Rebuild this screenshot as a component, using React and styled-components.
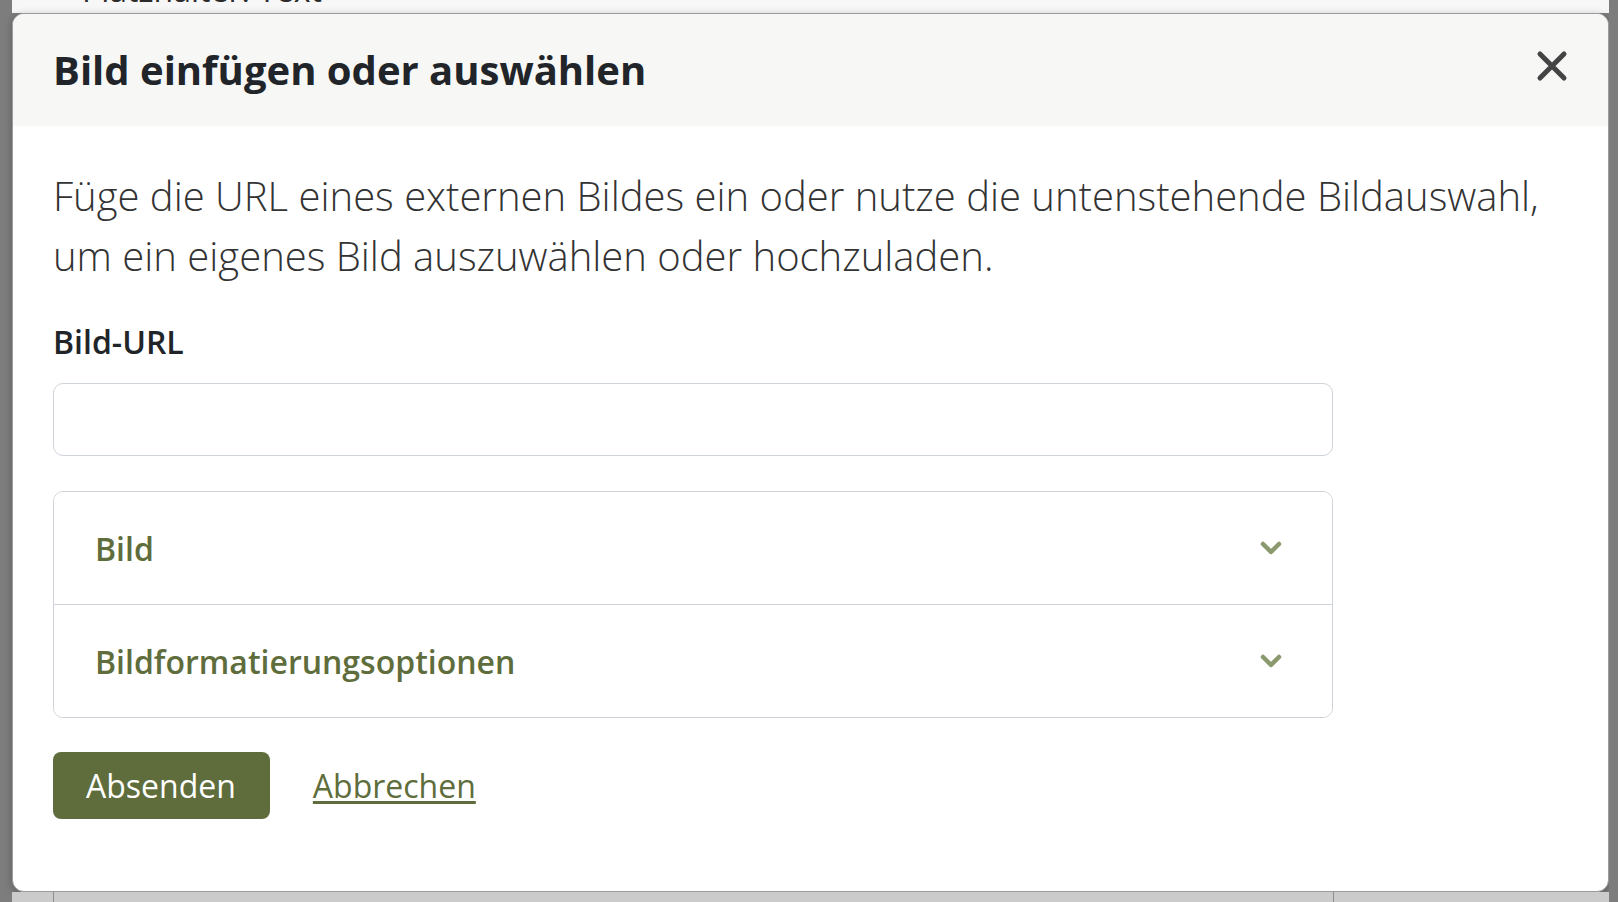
import React from 'react';
import styled, { createGlobalStyle } from 'styled-components';

const GlobalStyle = createGlobalStyle`
  html, body {
    margin: 0;
    padding: 0;
  }

  body {
    font-family: "Open Sans", "Noto Sans", sans-serif;
    background: #7d7d7d;
    color: #212529;
  }

  * {
    box-sizing: border-box;
  }
`;

const olive = '#5e6d3b';

const Screen = styled.div`
  display: flex;
  width: 1618px;
  height: 902px;
  overflow: hidden;
`;

const Strip = styled.div`
  flex: 0 0 ${(p) => p.$width}px;
  background: #7d7d7d;
`;

const Center = styled.div`
  flex: 1;
  display: flex;
  flex-direction: column;
  min-width: 0;
`;

const Peek = styled.div`
  flex: 0 0 ${(p) => p.$height}px;
  background: ${(p) => p.$bg};
  overflow: hidden;
  padding-left: 41px;
`;

const PeekColumn = styled.div`
  width: 1281px;
  height: 100%;
  border-left: 1px solid ${(p) => p.$line};
  border-right: 1px solid ${(p) => p.$line};
`;

const PeekText = styled.div`
  margin-top: -30px;
  padding-left: 28px;
  font-size: 32px;
  line-height: 40px;
  color: #2b2b2b;
`;

const Modal = styled.div`
  flex: 1;
  display: flex;
  flex-direction: column;
  background: #fff;
  border: 1px solid #9c9c9c;
  border-radius: 12px;
  overflow: hidden;
  box-shadow: 0 2px 8px rgba(0, 0, 0, 0.25);
`;

const Header = styled.header`
  flex: 0 0 112px;
  display: flex;
  align-items: center;
  justify-content: space-between;
  padding: 0 40px 0 40px;
  background: #f7f7f5;
`;

const Title = styled.h1`
  margin: 0;
  font-size: 40px;
  font-weight: 700;
  line-height: 52px;
  color: #212529;
`;

const CloseButton = styled.button`
  display: flex;
  margin-bottom: 9px;
  padding: 0;
  border: none;
  background: transparent;
  cursor: pointer;
`;

const Body = styled.div`
  flex: 1;
  padding: 40px 40px 0 40px;
`;

const Intro = styled.p`
  margin: 0 0 32px;
  font-size: 40px;
  font-weight: 300;
  line-height: 60px;
  color: #333;
`;

const Form = styled.form`
  width: 1280px;
`;

const Label = styled.label`
  display: block;
  margin-bottom: 17px;
  font-size: 32px;
  font-weight: 600;
  line-height: 48px;
  color: #212529;
`;

const Input = styled.input`
  display: block;
  width: 100%;
  height: 73px;
  padding: 0 20px;
  border: 1px solid #ced4da;
  border-radius: 10px;
  font: inherit;
  font-size: 32px;
  outline: none;
`;

const Accordion = styled.div`
  margin-top: 35px;
  border: 1px solid #ced4da;
  border-radius: 10px;
  overflow: hidden;
`;

const AccordionItem = styled.button`
  display: flex;
  width: 100%;
  height: ${(p) => (p.$first ? 112 : 113)}px;
  align-items: center;
  justify-content: space-between;
  padding: 0 50px 0 41px;
  border: none;
  border-top: ${(p) => (p.$first ? 'none' : '1px solid #ced4da')};
  background: #fff;
  font-family: inherit;
  font-size: 32px;
  font-weight: 600;
  color: ${olive};
  text-align: left;
  cursor: pointer;
`;

const Footer = styled.div`
  display: flex;
  align-items: center;
  gap: 43px;
  margin-top: 34px;
`;

const SubmitButton = styled.button`
  height: 67px;
  padding: 0 34px 0 33px;
  border: none;
  border-radius: 8px;
  background: ${olive};
  font-family: inherit;
  font-size: 32px;
  font-weight: 400;
  color: #fff;
  cursor: pointer;
`;

const CancelLink = styled.a`
  font-size: 32px;
  color: ${olive};
  text-decoration: underline;
  text-underline-offset: 3px;
  cursor: pointer;
`;

const CloseIcon = () => (
  <svg width="32" height="32" viewBox="0 0 32 32" fill="none">
    <path d="M4 4 L28 28 M28 4 L4 28" stroke="#444" strokeWidth="5" strokeLinecap="round" />
  </svg>
);

const Chevron = () => (
  <svg width="22" height="14" viewBox="0 0 22 14" fill="none">
    <polyline
      points="3,3 11,11 19,3"
      stroke="#8b9a6e"
      strokeWidth="4.5"
      strokeLinecap="round"
      strokeLinejoin="round"
    />
  </svg>
);

const sections = ['Bild', 'Bildformatierungsoptionen'];

export default function App() {
  return (
    <>
      <GlobalStyle />
      <Screen>
        <Strip $width={12} />
        <Center>
          <Peek $height={13} $bg="#f7f7f7">
            <PeekColumn $line="#cfcfcf">
              <PeekText>Platzhalter: Text</PeekText>
            </PeekColumn>
          </Peek>
          <Modal role="dialog" aria-modal="true">
            <Header>
              <Title>Bild einfügen oder auswählen</Title>
              <CloseButton aria-label="Schließen">
                <CloseIcon />
              </CloseButton>
            </Header>
            <Body>
              <Intro>
                Füge die URL eines externen Bildes ein oder nutze die untenstehende Bildauswahl,
                <br />
                um ein eigenes Bild auszuwählen oder hochzuladen.
              </Intro>
              <Form onSubmit={(e) => e.preventDefault()}>
                <Label htmlFor="bild-url">Bild-URL</Label>
                <Input id="bild-url" type="text" />
                <Accordion>
                  {sections.map((name, i) => (
                    <AccordionItem key={name} type="button" $first={i === 0}>
                      {name}
                      <Chevron />
                    </AccordionItem>
                  ))}
                </Accordion>
                <Footer>
                  <SubmitButton type="submit">Absenden</SubmitButton>
                  <CancelLink>Abbrechen</CancelLink>
                </Footer>
              </Form>
            </Body>
          </Modal>
          <Peek $height={10} $bg="#cbcbcb">
            <PeekColumn $line="#8e8e8e" />
          </Peek>
        </Center>
        <Strip $width={9} />
      </Screen>
    </>
  );
}
